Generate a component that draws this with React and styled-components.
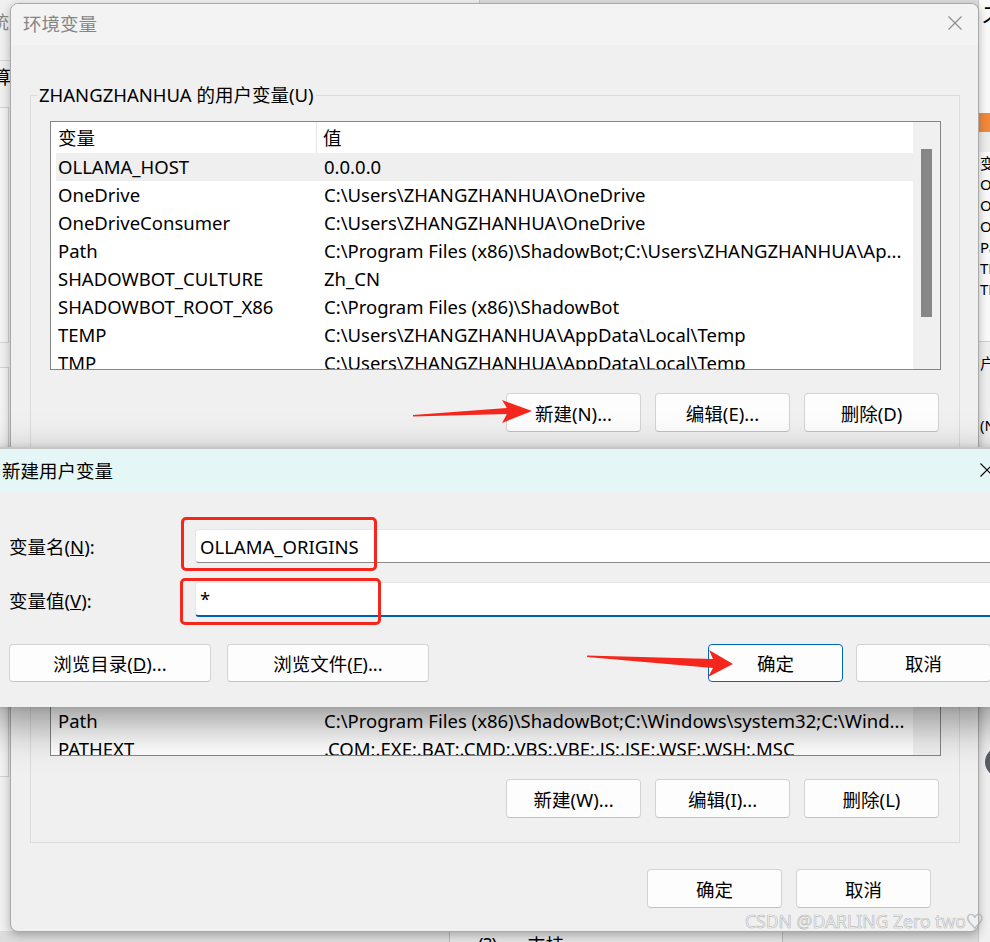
import React from 'react';
import styled, { createGlobalStyle } from 'styled-components';

const GlobalStyle = createGlobalStyle`
  html, body {
    margin: 0;
    padding: 0;
    background: #dcdcdc;
  }
  body {
    font-family: "Noto Sans", "Noto Sans CJK SC", sans-serif;
  }
  * {
    box-sizing: border-box;
  }
`;

const Desktop = styled.div`
  position: relative;
  width: 990px;
  height: 942px;
  overflow: hidden;
  background: #dcdcdc;
  color: #000;
  font-size: 18.5px;
`;

/* ---------- windows behind ---------- */

const SysWindow = styled.div`
  position: absolute;
  left: -40px;
  top: 0;
  width: 520px;
  height: 931px;
  background: #f0f0f0;
  border-right: 1px solid #c6c6c6;
  display: flex;
  flex-direction: column;
  white-space: nowrap;
`;

const SysTitle = styled.div`
  height: 45px;
  display: flex;
  align-items: center;
  padding: 0 0 3px 12px;
  color: #8a8a8a;
`;

const SysTabs = styled.div`
  margin-top: 15px;
  padding: 2px 0 0 14px;
  border-top: 1px solid #d6d6d6;
`;

const SysPanel = styled.div`
  margin-top: ${p => p.$top}px;
  width: 49px;
  height: ${p => p.$h}px;
  border: 1px solid #d2d2d2;
  background: #f3f3f3;
`;

const HelpBar = styled.div`
  position: absolute;
  left: 449px;
  top: 929px;
  width: 334px;
  height: 30px;
  padding: 2px 0 0 28px;
  border-left: 1px solid #b9b9b9;
  border-right: 1px solid #b9b9b9;
  background: #e4e4e4;
  display: flex;
  gap: 30px;
  align-items: flex-start;
`;

const SideWindow = styled.div`
  position: absolute;
  left: 978px;
  top: 0;
  width: 140px;
  height: 942px;
  background: #fafafa;
  border-left: 1px solid #c8c8c8;
  display: flex;
  flex-direction: column;
  font-size: 15px;
  white-space: nowrap;
`;

const SideGlyph = styled.div`
  height: 113px;
  padding: 2px 0 0 2px;
  font-size: 21px;
  line-height: 24px;
`;

const SideOrange = styled.div`
  height: 19px;
  background: #f08a3c;
`;

const SideHead = styled.div`
  height: 20px;
  background: #ededed;
`;

const SideList = styled.div`
  display: flex;
  flex-direction: column;
  line-height: 21px;
  padding: 1px 0 0 1px;
  height: 190px;
  border-bottom: 1px solid #d0d0d0;
`;

const SideLower = styled.div`
  flex: 1;
  background: #f0f0f0;
  padding: 10px 0 0 1px;
  display: flex;
  flex-direction: column;
  gap: 42px;
`;

const SideCircle = styled.div`
  margin: 270px 0 0 5px;
  width: 30px;
  height: 30px;
  border-radius: 50%;
  background: #5a5d63;
`;

/* ---------- main dialog ---------- */

const Dialog = styled.div`
  position: absolute;
  left: 10px;
  top: 3px;
  width: 969px;
  height: 929px;
  background: #f0f0f0;
  border: 1px solid #a9a9a9;
  border-radius: 8px;
  overflow: hidden;
  box-shadow: 0 3px 10px rgba(0, 0, 0, 0.28);
  display: flex;
  flex-direction: column;
`;

const TitleBar = styled.div`
  flex: none;
  height: ${p => p.$h || 41}px;
  display: flex;
  align-items: center;
  justify-content: space-between;
  padding-left: ${p => p.$pad || 12}px;
  background: ${p => p.$bg || '#f3f3f3'};
  color: ${p => p.$color || '#000'};
`;

const TitleText = styled.span`
  padding-bottom: ${p => p.$lift || 0}px;
`;

const CloseBox = styled.div`
  width: 46px;
  height: 100%;
  display: flex;
  align-items: center;
  justify-content: center;
  padding-bottom: ${p => p.$lift || 0}px;
  color: ${p => p.$color || '#000'};
`;

const DialogBody = styled.div`
  flex: 1;
  display: flex;
  flex-direction: column;
  padding: 38px 18px 0 19px;
`;

const Group = styled.fieldset`
  margin: 0 0 ${p => p.$gap || 0}px 0;
  padding: 14px 18px ${p => p.$bottom}px 19px;
  border: 1px solid #dcdcdc;
  min-width: 0;
`;

const GroupLabel = styled.legend`
  margin-left: -13px;
  padding: 0 2px;
  line-height: 24px;
`;

const ListBox = styled.div`
  height: 249px;
  border: 1px solid #858585;
  background: #fff;
  display: grid;
  grid-template-columns: 1fr 27px;
  overflow: hidden;
`;

const ListMain = styled.div`
  display: flex;
  flex-direction: column;
  min-width: 0;
  overflow: hidden;
`;

const HeaderRow = styled.div`
  flex: none;
  height: 31px;
  display: grid;
  grid-template-columns: 266px 1fr;
`;

const HeaderCell = styled.div`
  display: flex;
  align-items: center;
  padding-left: ${p => (p.$first ? 7 : 6)}px;
  padding-bottom: 1px;
  border-right: ${p => (p.$first ? '1px solid #e6e6e6' : 'none')};
`;

const Rows = styled.div`
  padding-left: 5px;
  display: flex;
  flex-direction: column;
`;

const Row = styled.div`
  flex: none;
  height: 28px;
  padding-bottom: 1px;
  display: grid;
  grid-template-columns: 262px 1fr;
  align-items: center;
  background: ${p => (p.$selected ? '#efefef' : 'transparent')};
  white-space: nowrap;
`;

const NameCell = styled.div`
  padding-left: 2px;
  overflow: hidden;
`;

const ValueCell = styled.div`
  padding-left: 6px;
  overflow: hidden;
`;

const ScrollTrack = styled.div`
  background: #f0f0f0;
  padding-left: 8px;
`;

const ScrollThumb = styled.div`
  margin-top: ${p => p.$top}px;
  width: 11px;
  height: ${p => p.$height}px;
  background: #878787;
`;

const ButtonRow = styled.div`
  display: flex;
  justify-content: flex-end;
  gap: ${p => p.$gap || 14}px;
  margin-top: ${p => p.$top || 0}px;
  padding-right: ${p => p.$right || 0}px;
`;

const Button = styled.button`
  width: ${p => p.$w || 135}px;
  height: ${p => p.$h || 39}px;
  flex: none;
  padding: 0;
  font-family: inherit;
  font-size: 18.5px;
  color: #000;
  background: #fdfdfd;
  border: 1px solid ${p => (p.$focus ? '#0067c0' : '#d3d3d3')};
  border-bottom-color: ${p => (p.$focus ? '#0067c0' : '#c2c2c2')};
  border-radius: 4px;
`;

/* ---------- child dialog ---------- */

const ChildDialog = styled.div`
  position: absolute;
  left: -12px;
  top: 447px;
  width: 1022px;
  height: 260px;
  background: #f0f0f0;
  border-top: 2px solid #c7c7c7;
  box-shadow: 0 16px 40px rgba(0, 0, 0, 0.42), 0 0 6px rgba(0, 0, 0, 0.12);
  display: flex;
  flex-direction: column;
`;

const ChildBody = styled.div`
  flex: 1;
  padding: 38px 19px 24px 21px;
  display: flex;
  flex-direction: column;
`;

const Form = styled.div`
  display: grid;
  grid-template-columns: 186px 1fr;
  row-gap: 19px;
  align-items: center;
`;

const FieldLabel = styled.div`
  white-space: nowrap;
`;

const TextBox = styled.div`
  height: ${p => (p.$focus ? 35 : 34)}px;
  background: #fff;
  border: 1px solid #e6e6e6;
  border-bottom: ${p => (p.$focus ? '2px solid #005fb8' : '1px solid #8a8a8a')};
  border-radius: 4px 0 0 4px;
  padding-left: 4px;
  padding-top: ${p => (p.$focus ? 3 : 0)}px;
  display: flex;
  align-items: ${p => (p.$focus ? 'flex-start' : 'center')};
`;

const ChildButtons = styled.div`
  margin-top: 27px;
  display: flex;
  justify-content: space-between;
`;

const ButtonGroup = styled.div`
  display: flex;
  gap: ${p => p.$gap}px;
`;

/* ---------- annotations ---------- */

const RedBox = styled.div`
  position: absolute;
  left: ${p => p.$x}px;
  top: ${p => p.$y}px;
  width: ${p => p.$w}px;
  height: ${p => p.$h}px;
  border: 3px solid #f5261c;
  border-radius: 5px;
`;

const ArrowLayer = styled.svg`
  position: absolute;
  left: 0;
  top: 0;
  width: 990px;
  height: 942px;
  pointer-events: none;
`;

const Watermark = styled.div`
  position: absolute;
  left: 745px;
  top: 908px;
  font-size: 17.6px;
  line-height: 26px;
  white-space: nowrap;
  color: rgba(255, 255, 255, 0.55);
  -webkit-text-stroke: 0.7px rgba(140, 140, 140, 0.55);
`;

const userVars = [
  ['OLLAMA_HOST', '0.0.0.0'],
  ['OneDrive', 'C:\\Users\\ZHANGZHANHUA\\OneDrive'],
  ['OneDriveConsumer', 'C:\\Users\\ZHANGZHANHUA\\OneDrive'],
  ['Path', 'C:\\Program Files (x86)\\ShadowBot;C:\\Users\\ZHANGZHANHUA\\Ap...'],
  ['SHADOWBOT_CULTURE', 'Zh_CN'],
  ['SHADOWBOT_ROOT_X86', 'C:\\Program Files (x86)\\ShadowBot'],
  ['TEMP', 'C:\\Users\\ZHANGZHANHUA\\AppData\\Local\\Temp'],
  ['TMP', 'C:\\Users\\ZHANGZHANHUA\\AppData\\Local\\Temp'],
];

const systemVars = [
  ['ComSpec', 'C:\\Windows\\system32\\cmd.exe'],
  ['DriverData', 'C:\\Windows\\System32\\Drivers\\DriverData'],
  ['NUMBER_OF_PROCESSORS', '16'],
  ['OnlineServices', 'Online Services'],
  ['OS', 'Windows_NT'],
  ['platformcode', 'AN'],
  ['Path', 'C:\\Program Files (x86)\\ShadowBot;C:\\Windows\\system32;C:\\Wind...'],
  ['PATHEXT', '.COM;.EXE;.BAT;.CMD;.VBS;.VBE;.JS;.JSE;.WSF;.WSH;.MSC'],
];

function CloseIcon({ size = 14 }) {
  return (
    <svg width={size} height={size} viewBox="0 0 14 14">
      <path d="M0.5 0.5 L13.5 13.5 M13.5 0.5 L0.5 13.5" stroke="currentColor" strokeWidth="1.1" fill="none" />
    </svg>
  );
}

function VarList({ rows, selected, thumbTop, thumbHeight }) {
  return (
    <ListBox>
      <ListMain>
        <HeaderRow>
          <HeaderCell $first>变量</HeaderCell>
          <HeaderCell>值</HeaderCell>
        </HeaderRow>
        <Rows>
          {rows.map(([name, value], i) => (
            <Row key={name} $selected={i === selected}>
              <NameCell>{name}</NameCell>
              <ValueCell>{value}</ValueCell>
            </Row>
          ))}
        </Rows>
      </ListMain>
      <ScrollTrack>
        <ScrollThumb $top={thumbTop} $height={thumbHeight} />
      </ScrollTrack>
    </ListBox>
  );
}

export default function App() {
  return (
    <Desktop>
      <GlobalStyle />

      <SysWindow>
        <SysTitle>系统属性</SysTitle>
        <SysTabs>计算机名</SysTabs>
        <SysPanel $top={18} $h={236} />
        <SysPanel $top={24} $h={410} />
      </SysWindow>

      <HelpBar>
        <span>(?)</span>
        <span>支持</span>
      </HelpBar>

      <SideWindow>
        <SideGlyph>ス</SideGlyph>
        <SideOrange />
        <SideHead />
        <SideList>
          <span>变量</span>
          <span>OLLAMA</span>
          <span>OneDrive</span>
          <span>OneDrive</span>
          <span>Path</span>
          <span>TEMP</span>
          <span>TMP</span>
        </SideList>
        <SideLower>
          <span>户变量</span>
          <span>(N</span>
          <SideCircle />
        </SideLower>
      </SideWindow>

      <Dialog>
        <TitleBar $color="#858585">
          <TitleText $lift={3}>环境变量</TitleText>
          <CloseBox $color="#8c8c8c" $lift={3}>
            <CloseIcon />
          </CloseBox>
        </TitleBar>
        <DialogBody>
          <Group $bottom={21} $gap={15}>
            <GroupLabel>ZHANGZHANHUA 的用户变量(U)</GroupLabel>
            <VarList rows={userVars} selected={0} thumbTop={27} thumbHeight={168} />
            <ButtonRow $top={23} $right={2}>
              <Button>新建(N)...</Button>
              <Button>编辑(E)...</Button>
              <Button>删除(D)</Button>
            </ButtonRow>
          </Group>
          <Group $bottom={24}>
            <GroupLabel>系统变量(S)</GroupLabel>
            <VarList rows={systemVars} thumbTop={10} thumbHeight={110} />
            <ButtonRow $top={23} $right={2}>
              <Button>新建(W)...</Button>
              <Button>编辑(I)...</Button>
              <Button>删除(L)</Button>
            </ButtonRow>
          </Group>
          <ButtonRow $top={26} $right={29}>
            <Button>确定</Button>
            <Button>取消</Button>
          </ButtonRow>
        </DialogBody>
      </Dialog>

      <ChildDialog>
        <TitleBar $h={42} $pad={14} $bg="#e4f6f5">
          <TitleText>新建用户变量</TitleText>
          <CloseBox>
            <CloseIcon />
          </CloseBox>
        </TitleBar>
        <ChildBody>
          <Form>
            <FieldLabel>
              变量名(<u>N</u>):
            </FieldLabel>
            <TextBox>OLLAMA_ORIGINS</TextBox>
            <FieldLabel>
              变量值(<u>V</u>):
            </FieldLabel>
            <TextBox $focus>*</TextBox>
          </Form>
          <ChildButtons>
            <ButtonGroup $gap={16}>
              <Button $w={202} $h={38}>
                浏览目录(<u>D</u>)...
              </Button>
              <Button $w={202} $h={38}>
                浏览文件(<u>F</u>)...
              </Button>
            </ButtonGroup>
            <ButtonGroup $gap={13}>
              <Button $h={38} $focus>
                确定
              </Button>
              <Button $h={38}>取消</Button>
            </ButtonGroup>
          </ChildButtons>
        </ChildBody>
      </ChildDialog>

      <RedBox $x={181} $y={517} $w={196} $h={54} />
      <RedBox $x={180} $y={578} $w={201} $h={47} />

      <ArrowLayer viewBox="0 0 990 942">
        <path d="M413 415 L507 408 L502 400 L532 411 L502 423 L507 414 L413 416.5 Z" fill="#f5261c" />
        <path d="M587 655.5 L713 659 L709 650 L733 664 L708 677 L713 668 L587 657 Z" fill="#f5261c" />
      </ArrowLayer>

      <Watermark>CSDN @DARLING Zero two♡</Watermark>
    </Desktop>
  );
}
